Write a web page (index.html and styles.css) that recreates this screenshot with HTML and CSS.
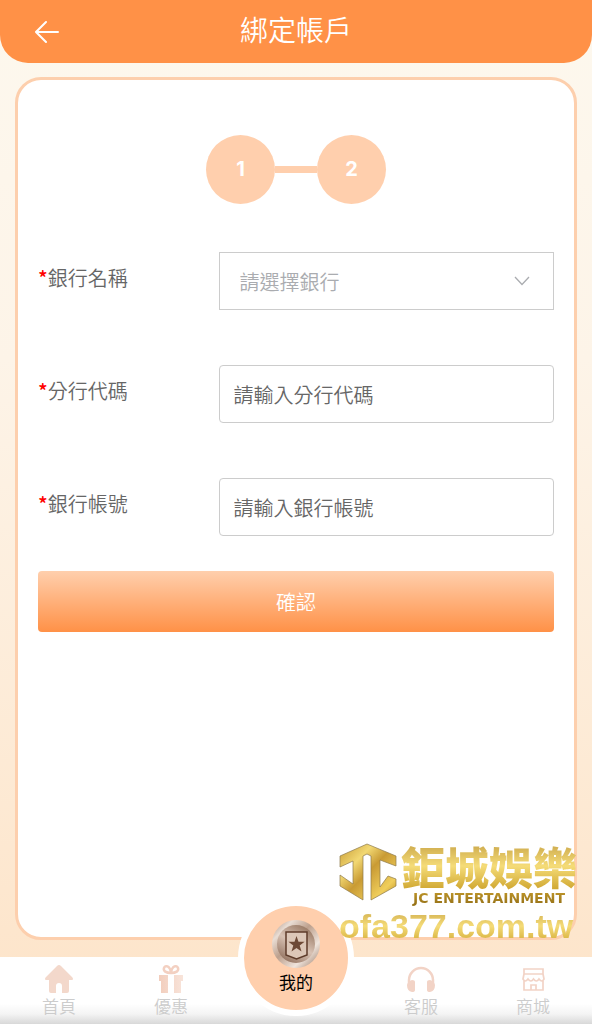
FILE: index.html
```html
<!DOCTYPE html>
<html lang="zh-Hant">
<head>
<meta charset="utf-8">
<meta name="viewport" content="width=device-width, initial-scale=1">
<title>綁定帳戶</title>
<link rel="stylesheet" href="styles.css">
</head>
<body class="app">
<header class="topbar">
  <button class="back" type="button" aria-label="返回">
    <svg width="24" height="24" viewBox="0 0 24 24" fill="none" stroke="currentColor" stroke-width="2" stroke-linecap="round"><path d="M11 2 1 12l10 10M1 12h22"/></svg>
  </button>
  <h1 class="title">綁定帳戶</h1>
</header>

<main class="card">
  <ol class="steps">
    <li class="step">1</li>
    <li class="step-line" aria-hidden="true"></li>
    <li class="step">2</li>
  </ol>
  <form class="form">
    <div class="row">
      <label class="label" for="bank"><span class="required">*</span>銀行名稱</label>
      <div class="select-wrap">
        <select class="field field-select" id="bank"><option>請選擇銀行</option></select>
        <svg class="chevron" width="16" height="10" viewBox="0 0 16 10" fill="none" stroke="currentColor" stroke-width="1.300"><path d="m1 1 7 7.500 7-7.500"/></svg>
      </div>
    </div>
    <div class="row">
      <label class="label" for="branch"><span class="required">*</span>分行代碼</label>
      <input class="field" id="branch" type="text" placeholder="請輸入分行代碼">
    </div>
    <div class="row">
      <label class="label" for="account"><span class="required">*</span>銀行帳號</label>
      <input class="field" id="account" type="text" placeholder="請輸入銀行帳號">
    </div>
    <button class="submit" type="submit">確認</button>
  </form>
</main>

<nav class="tabs">
  <a class="tab" href="#home">
    <svg width="30" height="30" viewBox="0 0 30 30"><path fill="#f3d8cb" d="M15 1q1 0 2 1l11 11q1 1 1 2t-1 1h-3v11q0 2-2 2h-5v-7a3 3 0 0 0-6 0v7H7q-2 0-2-2V16H2q-1 0-1-1t1-2L13 2q1-1 2-1Z"/></svg>
    首頁
  </a>
  <a class="tab" href="#offers">
    <svg width="30" height="30" viewBox="0 0 30 30"><defs><linearGradient id="gift" x2="1"><stop stop-color="#f2cdbc"/><stop offset="1" stop-color="#f8e4da"/></linearGradient></defs><path fill="url(#gift)" d="M3 11h9v18H5V17H3Zm15 0h9v6h-2v12h-7Z"/><path fill="none" stroke="#f3d0c1" stroke-width="2.500" d="M15 9C10 9 7 7 8 4s6-3 7 5c1-8 6-8 7-5s-2 5-7 5Z"/></svg>
    優惠
  </a>
  <a class="tab tab-current" href="#mine" aria-current="page">
    <svg width="48" height="48" viewBox="0 0 48 48"><defs><linearGradient id="rim" x2="1" y2="1"><stop stop-color="#a58a7a"/><stop offset=".22" stop-color="#e9ddd4"/><stop offset=".45" stop-color="#bda08d"/><stop offset=".72" stop-color="#efe4dc"/><stop offset="1" stop-color="#94745f"/></linearGradient><linearGradient id="disc" x1=".8" x2=".2" y2="1"><stop stop-color="#92725d"/><stop offset=".5" stop-color="#d8c2b4"/><stop offset="1" stop-color="#8e6d5a"/></linearGradient></defs><circle cx="24" cy="24" r="24" fill="url(#rim)"/><circle cx="24" cy="24" r="19" fill="url(#disc)"/><path fill="#dcc7b8" stroke="#5d3b2a" stroke-width="1.500" d="M14 12h21v23l-10.500 4L14 35Z"/><path fill="#6d4936" d="m24.500 16 2 5.700 6.100.1-4.900 3.700 1.800 5.900-5-3.500-5 3.500 1.800-5.900-4.900-3.700 6.100-.1Z"/></svg>
    我的
  </a>
  <a class="tab" href="#service">
    <svg width="30" height="30" viewBox="0 0 30 30" fill="#f2d3c6"><path fill="none" stroke="#f2d3c6" stroke-width="2.500" d="M3 22v-6a12 12 0 0 1 24 0v6"/><path d="M1 21q1-4 5-5q3 0 3 2v8q0 2-3 2q-5-1-5-7Zm28 0q-1-4-5-5q-3 0-3 2v8q0 2 3 2q5-1 5-7Z"/></svg>
    客服
  </a>
  <a class="tab" href="#shop">
    <svg width="30" height="30" viewBox="0 0 30 30" fill="none" stroke="#f2d3c6" stroke-width="1.700"><path d="M6 5h19v5H6zM6 10l-1 5q2 4 5 0 3 4 5.500 0 3 4 5.500 0 3 4 5 0l-1-5M6 17v9h19v-9M13 26v-5h5v5"/></svg>
    商城
  </a>
</nav>

<aside class="brand">
  <div class="brand-top">
    <svg class="brand-mark" width="58" height="60" viewBox="0 0 58 60"><defs><linearGradient id="gold" x2="1" y2="1"><stop stop-color="#c79a32"/><stop offset=".3" stop-color="#f2d873"/><stop offset=".5" stop-color="#c99b34"/><stop offset=".8" stop-color="#f0ce5c"/><stop offset="1" stop-color="#b58416"/></linearGradient></defs><g fill="url(#gold)" stroke="#8c7a4c" stroke-width=".7"><path d="M1 14 28 2 57 14v10L41 18v27l8-11 8 3v7L32 58V14l-4-2-4 2v44L1 44V33l13 9V19L1 25Z"/></g></svg>
    <div>
      <div class="brand-name">鉅城娛樂</div>
      <div class="brand-sub">JC ENTERTAINMENT</div>
    </div>
  </div>
  <div class="brand-url">ofa377.com.tw</div>
</aside>
</body>
</html>
```
FILE: styles.css
```css
* { box-sizing: border-box; }

.app {
  display: flex;
  flex-direction: column;
  position: relative;
  min-height: 100vh;
  margin: 0;
  background: linear-gradient(#fdf8ee, #fdf4e8 35%, #fde5cb 95%);
  font-family: "Noto Sans CJK TC", sans-serif;
  font-size: 20px;
  font-weight: 350;
  color: #666;
}

.topbar {
  display: grid;
  grid-template-columns: 64px 1fr 64px;
  align-items: center;
  height: 63px;
  border-radius: 0 0 28px 28px;
  background: #ff9147;
  color: #fff;
}

.back {
  display: flex;
  justify-content: flex-end;
  padding: 0 5px 0 0;
  border: 0;
  background: none;
  color: inherit;
}

.title {
  margin: 0;
  padding-bottom: 6px;
  font-size: 28px;
  font-weight: 350;
  line-height: 40px;
  text-align: center;
}

.card {
  flex: 1;
  margin: 14px 15px 17px;
  padding: 55px 20px 40px;
  border: 3px solid #fdcfad;
  border-radius: 26px;
  background: #fff;
}

.steps {
  display: flex;
  justify-content: center;
  align-items: center;
  margin: 0 0 48px;
  padding: 0;
  list-style: none;
}

.step {
  width: 69px;
  height: 69px;
  border-radius: 50%;
  background: #ffcfad;
  color: #fff;
  font-family: Inter, sans-serif;
  font-weight: 700;
  line-height: 69px;
  text-align: center;
}

.step-line {
  width: 42px;
  height: 7px;
  background: #ffcfad;
}

.row {
  display: grid;
  grid-template-columns: 35% 65%;
  margin-bottom: 55px;
}

.row:last-of-type { margin-bottom: 35px; }

.label {
  line-height: 52px;
}

.required {
  color: #f00;
  font-weight: 500;
}

.select-wrap { position: relative; }

.field {
  display: block;
  width: 100%;
  height: 58px;
  padding: 0 14px;
  border: 1px solid #ccc;
  border-radius: 4px;
  background: #fff;
  color: #666;
  font: inherit;
}

.field::placeholder {
  color: #666;
  opacity: 1;
}

.field-select {
  appearance: none;
  padding: 0 48px 0 20px;
  border-radius: 0;
  color: #aaacb0;
}

.chevron {
  position: absolute;
  top: 24px;
  right: 24px;
  color: #aaacb0;
  pointer-events: none;
}

.submit {
  display: block;
  width: 100%;
  height: 61px;
  border: 0;
  border-radius: 4px;
  background: linear-gradient(#ffcfad, #ff9147);
  color: #fff;
  font: inherit;
}

.tabs {
  display: grid;
  grid-template-columns: 112px 112px 1fr 112px 112px;
  height: 67px;
  padding: 0 3px;
  background: linear-gradient(#fff 70%, #f4f4f4 85%, #d8d8d8);
}

.tab {
  display: flex;
  flex-direction: column;
  align-items: center;
  padding-top: 7px;
  color: #ccc;
  font-size: 17px;
  line-height: 24px;
  text-decoration: none;
}

.tab-current {
  justify-self: center;
  width: 116px;
  height: 116px;
  margin-top: -57px;
  padding-top: 14px;
  border: 6px solid #fff;
  border-radius: 50%;
  background: #ffcfad;
  color: #000;
  font-weight: 400;
  line-height: 28px;
}

.brand {
  position: absolute;
  right: 15px;
  bottom: 79px;
}

.brand-top {
  display: flex;
  gap: 4px;
}

.brand-name,
.brand-sub,
.brand-url {
  background: linear-gradient(#c9a548, #f5dc78 50%, #cfa630);
  background-clip: text;
  color: transparent;
  white-space: nowrap;
}

.brand-name {
  font-size: 44px;
  font-weight: 900;
  line-height: 48px;
}

.brand-sub {
  background-image: linear-gradient(#c39a2c, #8f6b14);
  font-family: "DejaVu Sans", sans-serif;
  font-size: 14px;
  font-weight: 700;
  line-height: 17px;
  text-align: center;
}

.brand-url {
  font-family: "Liberation Sans", sans-serif;
  font-size: 34px;
  font-weight: 700;
  line-height: 38px;
}
```
